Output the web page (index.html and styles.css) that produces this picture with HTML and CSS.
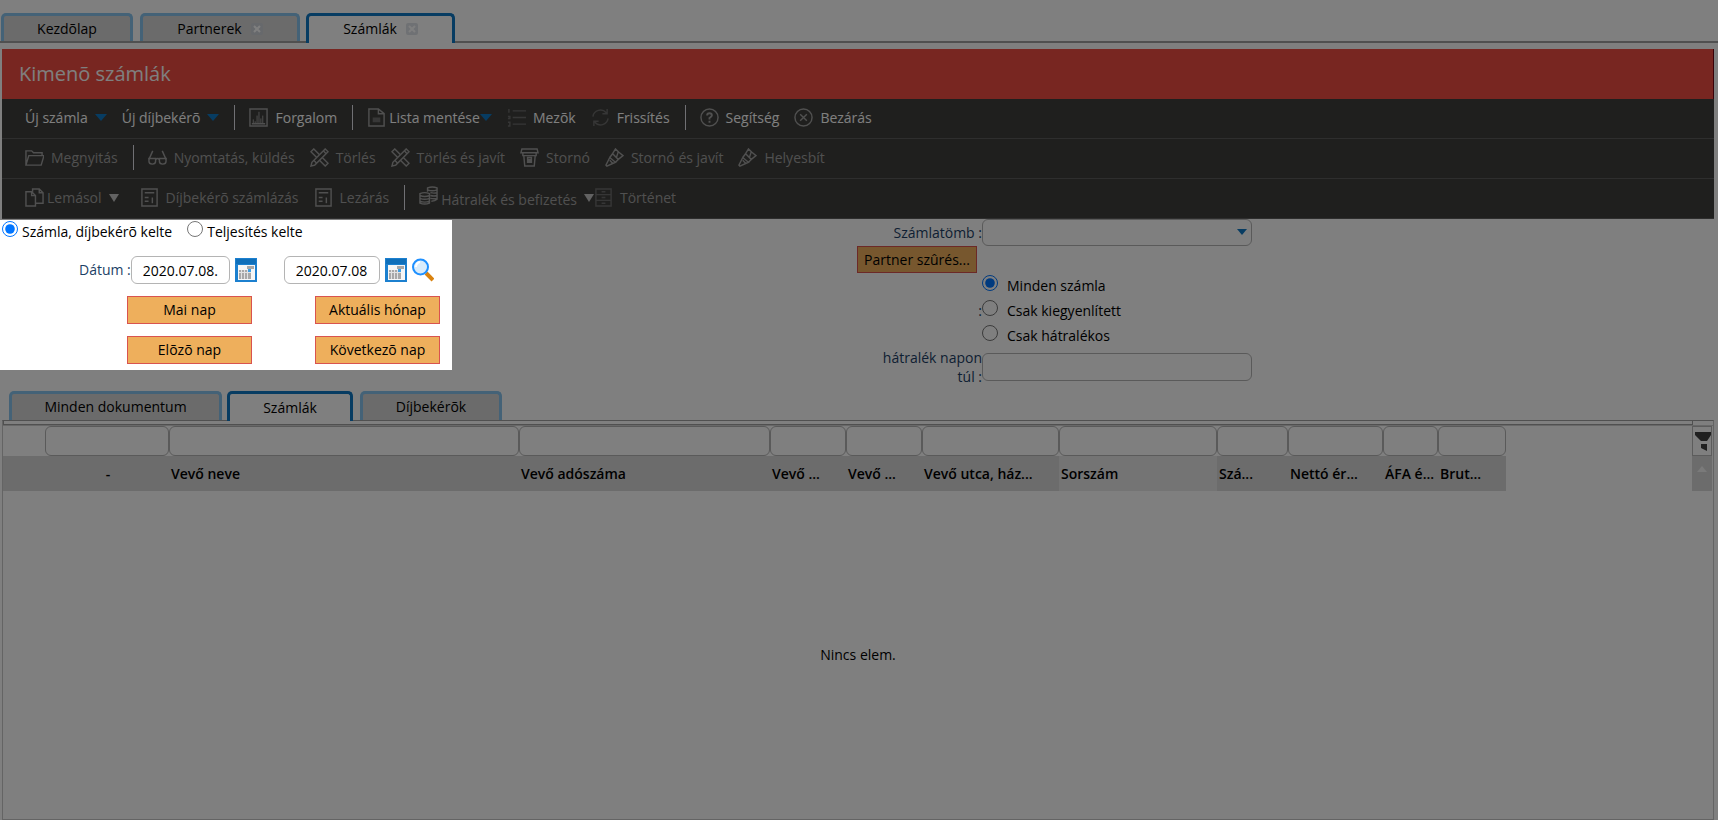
FILE: index.html
```
<!DOCTYPE html>
<html lang="hu">
<head>
<meta charset="utf-8">
<title>Kimenõ számlák</title>
<link rel="stylesheet" href="styles.css">
</head>
<body>
<svg class="defs" aria-hidden="true">
  <symbol id="i-cross" viewBox="0 0 20 20"><path d="M4 1 19 16 16 19 1 4z"/><path d="M16 1 19 4 5 18 1 19 2 15z" fill="#3f3f3c"/><path d="M14 3 17 6M4 13 7 16"/></symbol>
  <symbol id="i-pen" viewBox="0 0 20 20"><path d="M1 18 5 10 11 15 2 19zM5 10 8 6 14 12 11 15M8 6 11 1 14 4 12 10M14 4 19 8 14 12M5 13 8 16"/></symbol>
  <symbol id="i-doc" viewBox="0 0 18 20"><path d="M1 1H17V19H1zM4 5H14M4 10H8M4 14H8"/><path d="M12 10V16"/></symbol>
  <symbol id="i-cal" viewBox="0 0 22 24"><path fill="#1c80cf" d="M0 0H22V24H0z"/><path fill="#0f6fba" d="M1 1H21V6H1z"/><path fill="#f6f6f6" d="M3 7H20V22H3z"/><path fill="#a8a8a8" d="M12 8H19V11H12z M4 12H16V21H4z"/><path stroke="#e2e2e2" stroke-width="1" d="M6.500 12V21M9.500 12V21M12.500 12V21M4 14.500H16"/><path fill="#3a9ee6" d="M13 11H16V14H13z"/></symbol>
</svg>
<div class="app">
  <nav class="tabs main-tabs">
    <button class="tab t-home">Kezdõlap</button>
    <button class="tab t-partners">Partnerek <svg class="close" viewBox="0 0 12 12"><path d="M3 3 9 9M9 3 3 9"/></svg></button>
    <button class="tab t-bills active">Számlák <svg class="close" viewBox="0 0 12 12"><path d="M3 3 9 9M9 3 3 9"/></svg></button>
  </nav>

  <header class="head">
    <h1 class="title">Kimenõ számlák</h1>
    <div class="bar">
      <button class="tool">Új számla <i class="caret"></i></button>
      <button class="tool">Új díjbekérõ <i class="caret"></i></button>
      <i class="sep"></i>
      <button class="tool"><svg class="ico" viewBox="0 0 20 20"><path d="M1 1H19V19H1zM3 16.500H17"/><path stroke-width="1" d="M4.500 16V12M6.500 16V14M8.500 16V8M10.500 16V4M12.500 16V11M14.500 16V8"/></svg>Forgalom</button>
      <i class="sep"></i>
      <button class="tool tight"><svg class="ico" viewBox="0 0 20 20"><path d="M2 1H12L18 6V19H2zM12 1V6H18"/><path d="M6 10H14V15H6z" fill="currentColor" stroke="none" opacity=".5"/></svg>Lista mentése<i class="caret near"></i></button>
      <button class="tool"><svg class="ico faint" viewBox="0 0 20 20"><path d="M6 3H20M6 10H20M6 17H20M2 1V5M1 9H3V11H1M1 15H3V19H1"/></svg>Mezõk</button>
      <button class="tool"><svg class="ico faint" viewBox="0 0 20 20"><path d="M2 9A8 8 0 0 1 16 5M17 1V6H12M18 11A8 8 0 0 1 4 15M3 19V14H8"/></svg>Frissítés</button>
      <i class="sep"></i>
      <button class="tool"><svg class="ico" viewBox="0 0 20 20"><circle cx="10" cy="10" r="9"/><path d="M7.500 8Q7.500 5.500 10 5.500T12.500 8Q12.500 9 10 10.500V12M10 13.500V15.500" stroke-width="2"/></svg>Segítség</button>
      <button class="tool"><svg class="ico" viewBox="0 0 20 20"><circle cx="10" cy="10" r="9"/><path d="M6.500 6.500 13.500 13.500M13.500 6.500 6.500 13.500"/></svg>Bezárás</button>
    </div>
    <div class="bar off">
      <button class="tool"><svg class="ico" viewBox="0 0 20 20"><path d="M1 18V3H7L9 5H18V8M1 18 4 8H20L17 18z"/></svg>Megnyitás</button>
      <i class="sep"></i>
      <button class="tool"><svg class="ico" viewBox="0 0 20 20"><path d="M1 12 5 3M19 12 15 3M8 12Q10 10 12 12"/><path d="M1 11H8V14Q8 17 4.500 17T1 14zM12 11H19V14Q19 17 15.500 17T12 14z"/></svg>Nyomtatás, küldés</button>
      <button class="tool"><svg class="ico"><use href="#i-cross"/></svg>Törlés</button>
      <button class="tool"><svg class="ico"><use href="#i-cross"/></svg>Törlés és javít</button>
      <button class="tool"><svg class="ico" viewBox="0 0 20 20"><path d="M2 1H18L19 5H1zM3 5V8H17V5M4 8 5 19H15L16 8M8 10H12V15H8z"/><path d="M9 12H11V14H9z" fill="currentColor"/></svg>Stornó</button>
      <button class="tool"><svg class="ico"><use href="#i-pen"/></svg>Stornó és javít</button>
      <button class="tool"><svg class="ico"><use href="#i-pen"/></svg>Helyesbít</button>
    </div>
    <div class="bar off">
      <button class="tool tight"><svg class="ico" viewBox="0 0 20 20"><path d="M1 4H7L11 8V19H1zM7 4V8H11M8 4V1H15L19 5V16H11M15 1V5H19"/></svg>Lemásol <i class="caret small"></i></button>
      <button class="tool lead"><svg class="ico"><use href="#i-doc"/></svg>Díjbekérõ számlázás</button>
      <button class="tool"><svg class="ico"><use href="#i-doc"/></svg>Lezárás</button>
      <i class="sep"></i>
      <button class="tool tight"><svg class="ico raised" viewBox="0 0 20 20"><path d="M9 6V2Q14 0 19 2V14Q17 16 13 16M9 4Q14 6 19 4M12 7Q16 8 19 7M12 10Q16 11 19 10M12 13Q16 14 19 13M1 8Q6 6 11 8V18Q6 20 1 18zM1 10Q6 12 11 10M1 13Q6 15 11 13M1 16Q6 18 11 16"/></svg><span class="low">Hátralék és befizetés</span> <i class="caret small"></i></button>
      <button class="tool joined"><svg class="ico faint" viewBox="0 0 20 20"><path d="M2 1H18V19H2zM2 7H18M2 13H18M8 4H12M8 10H12M8 16H12"/></svg>Történet</button>
    </div>
  </header>

  <section class="filters">
    <form class="dates">
      <div class="kinds">
        <label class="radio"><input type="radio" name="kind" checked>Számla, díjbekérõ kelte</label>
        <label class="radio"><input type="radio" name="kind">Teljesítés kelte</label>
      </div>
      <div class="range">
        <label class="caption" for="from">Dátum :</label>
        <input class="box date" id="from" value="2020.07.08.">
        <button type="button" class="pick" aria-label="Naptár"><svg><use href="#i-cal"/></svg></button>
        <input class="box date second" aria-label="Dátum vége" value="2020.07.08.">
        <button type="button" class="pick" aria-label="Naptár"><svg><use href="#i-cal"/></svg></button>
        <button type="button" class="pick" aria-label="Keresés"><svg viewBox="0 0 22 24"><path d="M14 15 21 22" stroke="#d9820f" stroke-width="4"/><circle cx="8.500" cy="9" r="7.500" fill="#d9ecfb" stroke="#1e90ff" stroke-width="2"/><path d="M4 9Q4 5 8 4" stroke="#fff" stroke-width="2" fill="none"/></svg></button>
      </div>
      <div class="presets">
        <button type="button" class="btn">Mai nap</button>
        <button type="button" class="btn">Aktuális hónap</button>
        <button type="button" class="btn">Elõzõ nap</button>
        <button type="button" class="btn">Következõ nap</button>
      </div>
    </form>
    <form class="more">
      <label class="caption" for="block">Számlatömb :</label>
      <div class="pickbox"><select class="box wide" id="block"><option></option></select><i class="caret tiny"></i></div>
      <button type="button" class="btn partner">Partner szûrés...</button>
      <span class="caption">:</span>
      <div class="states">
        <label class="radio"><input type="radio" name="state" checked>Minden számla</label>
        <label class="radio"><input type="radio" name="state">Csak kiegyenlített</label>
        <label class="radio"><input type="radio" name="state">Csak hátralékos</label>
      </div>
      <label class="caption" for="late">hátralék napon túl :</label>
      <input class="box wide" id="late">
    </form>
  </section>

  <nav class="tabs sub-tabs">
    <button class="tab s-all">Minden dokumentum</button>
    <button class="tab s-bills active">Számlák</button>
    <button class="tab s-req">Díjbekérõk</button>
  </nav>
  <main class="grid">
    <div class="strip"></div>
    <div class="top">
      <table class="cols">
        <colgroup><col class="c0"><col class="c1"><col class="c2"><col class="c3"><col class="c4"><col class="c4"><col class="c6"><col class="c7"><col class="c8"><col class="c9"><col class="c10"><col class="c11"></colgroup>
        <thead>
        <tr class="search"><td></td>
          <td><input class="box" aria-label="Szûrés: -"></td><td><input class="box" aria-label="Szûrés: Vevő neve"></td><td><input class="box" aria-label="Szûrés: Vevő adószáma"></td><td><input class="box" aria-label="Szûrés 4"></td><td><input class="box" aria-label="Szûrés 5"></td><td><input class="box" aria-label="Szûrés 6"></td><td><input class="box" aria-label="Szûrés: Sorszám"></td><td><input class="box" aria-label="Szûrés 8"></td><td><input class="box" aria-label="Szûrés 9"></td><td><input class="box" aria-label="Szûrés 10"></td><td><input class="box" aria-label="Szûrés 11"></td></tr>
        <tr class="names"><th></th><th class="mid">-</th><th>Vevő neve</th><th>Vevő adószáma</th><th>Vevő ...</th><th>Vevő ...</th><th>Vevő utca, ház...</th><th class="sorted">Sorszám</th><th>Szá...</th><th>Nettó ér...</th><th>ÁFA é...</th><th>Brut...</th></tr>
        </thead>
      </table>
      <div class="side">
        <button class="funnel" aria-label="Szûrõ"><svg viewBox="0 0 18 22"><path d="M2 2H18V5L14 11H8L2 5zM8 14H14V21L8 18z"/></svg></button>
        <div class="up"><i class="caret rise"></i></div>
      </div>
    </div>
    <p class="empty">Nincs elem.</p>
  </main>
</div>
</body>
</html>
```
FILE: styles.css
```
* { box-sizing: border-box; }
body { margin: 0; font: 14px/20px "Open Sans", "Noto Sans", sans-serif; color: #000; background: #fff; }
button, input, select { font: inherit; color: inherit; margin: 0; }
button { border: 0; padding: 0; background: none; white-space: nowrap; }
svg { display: block; fill: none; stroke-width: 1.5; }
.defs { position: absolute; width: 0; height: 0; }
.app { display: flex; flex-direction: column; min-height: 100vh; overflow: hidden; }

/* tabs */
.tabs { display: flex; align-items: flex-end; }
.tab { display: flex; align-items: center; justify-content: center; gap: 9px; height: 28px; border: 3px solid #88c4ee; border-bottom: 0; border-radius: 5px 5px 0 0; background: #d6d6d6; }
.tab.active { height: 30px; border-color: #0f78c4; background: #fff; }
.main-tabs { height: 43px; padding-left: 1px; gap: 7px; border-bottom: 2px solid #a0a0a0; }
.main-tabs .tab.active { margin: 0 0 -2px -1px; padding-bottom: 2px; }
.t-home { width: 132px; }
.t-partners { width: 160px; }
.t-bills { width: 149px; }
.close { width: 12px; height: 12px; border-radius: 2px; background: #ced3d9; stroke: #fff; stroke-width: 2; }
.active .close { background: #dfe3e8; }

/* header and tool bars */
.head { margin: 6px 4px 0 2px; background: #3f3f3c; }
.title { margin: 0; height: 50px; padding-left: 17px; border-right: 1px solid #700010; background: #f04d42; color: #fff; font-size: 20px; font-weight: 400; line-height: 50px; }
.bar { display: flex; align-items: center; height: 40px; padding: 0 0 2px 23px; gap: 15px; border-bottom: 1px solid #5c5c5c; color: #fff; }
.tool { display: flex; align-items: center; gap: 7px; }
.tool.tight { gap: 3px; }
.tool.joined { margin-left: -15px; }
.tool.lead { margin-left: 6px; }
.off { color: #a0a0a0; }
.low { padding-top: 5px; }
.ico { width: 19px; height: 19px; color: #a0a0a0; stroke: currentColor; }
.ico.faint { color: #6c6c6c; }
.ico.raised { margin-bottom: 4px; }
.sep { width: 1px; height: 25px; margin-right: -1px; background: #e0e0e8; }
.caret { border: 6px solid transparent; border-top: 7px solid #0f78c4; border-bottom: 0; }
.caret.near { margin-left: -3px; }
.caret.small { margin-left: 4px; border-width: 8px 5px 0; border-top-color: #c4c4c4; }

/* filters */
.filters { display: flex; align-items: flex-start; margin-right: 4px; }
.dates { position: relative; z-index: 5; width: 452px; height: 150px; margin: 1px 405px 0 0; background: #fff; box-shadow: 0 0 0 4000px rgba(0, 0, 0, .5); }
.radio { display: flex; align-items: center; gap: 4px; }
.radio input { flex: none; width: 16px; height: 16px; margin-bottom: 5px; }
.kinds { display: flex; gap: 15px; padding: 1px 0 0 2px; }
.range { display: flex; align-items: center; margin-top: 14px; padding-left: 79px; }
.caption { color: #1c3f66; }
.box { height: 28px; padding: 0; border: 1px solid #b4b4b4; border-radius: 6px; background: #fff; }
.date { width: 99px; padding: 0 11px; }
.date.second { width: 96px; margin-left: 27px; }
.pick svg { width: 22px; height: 24px; margin-left: 5px; }
.presets { display: grid; grid-template-columns: 125px 125px; gap: 12px 63px; margin: 12px 0 0 127px; }
.btn { height: 28px; border: 1px solid #d9534f; background: #eeaf5c; }
.more { display: grid; grid-template-columns: 125px 270px; align-items: center; }
.more .caption { grid-column: 1; padding-left: 25px; text-align: right; line-height: 19px; }
.wide { grid-column: 2; width: 100%; }
.pickbox { position: relative; height: 27px; }
.pickbox .box { height: 27px; appearance: none; }
.caret.tiny { position: absolute; right: 5px; top: 10px; border-width: 6px 5px 0; }
.partner { grid-column: 1; width: 120px; height: 27px; }
.states .radio { height: 25px; gap: 9px; }

/* grid */
.sub-tabs { padding-left: 9px; margin-top: 3px; gap: 7px; height: 31px; }
.sub-tabs .tab { height: 29px; }
.sub-tabs .tab.active { position: relative; height: 30px; margin: 0 0 -1px -2px; }
.s-all { width: 213px; }
.s-bills { width: 126px; }
.s-req { width: 142px; }
.grid { flex: 1; display: flex; flex-direction: column; margin: 0 4px 0 2px; border: 1px solid #c8c8c8; border-top: 1px solid #a0a0a0; }
.strip { height: 4px; margin-right: 20px; border: 1px solid #a0a0a0; border-top: 0; }
.top { display: flex; align-items: flex-start; justify-content: space-between; border-top: 1px solid #d0d0d0; }
.cols { table-layout: fixed; width: 1503px; border-collapse: collapse; }
.cols td, .cols th { padding: 0; }
.cols .box { display: block; width: 100%; height: 30px; }
.names { height: 35px; background: #d8d8d8; }
.cols th { padding-left: 2px; text-align: left; font-weight: 600; white-space: nowrap; }
.cols .mid { text-align: center; }
.cols .sorted { background: #e8e8e8; }
.c0 { width: 42px; }
.c1 { width: 124px; }
.c2 { width: 350px; }
.c3 { width: 251px; }
.c4 { width: 76px; }
.c6 { width: 137px; }
.c7 { width: 158px; }
.c8 { width: 71px; }
.c9 { width: 95px; }
.c10 { width: 55px; }
.c11 { width: 68px; }
.side { display: flex; flex-direction: column; width: 20px; margin-right: 1px; }
.funnel { width: 20px; height: 30px; border: 1px solid #b8b8b8; }
.funnel svg { width: 18px; height: 22px; fill: #404040; }
.up { display: flex; justify-content: center; height: 35px; padding-top: 10px; background: #d8d8d8; }
.caret.rise { height: 0; border-width: 0 5px 6px; border-style: solid; border-color: transparent transparent #f4f4f4; }
.empty { margin: auto; }
```
